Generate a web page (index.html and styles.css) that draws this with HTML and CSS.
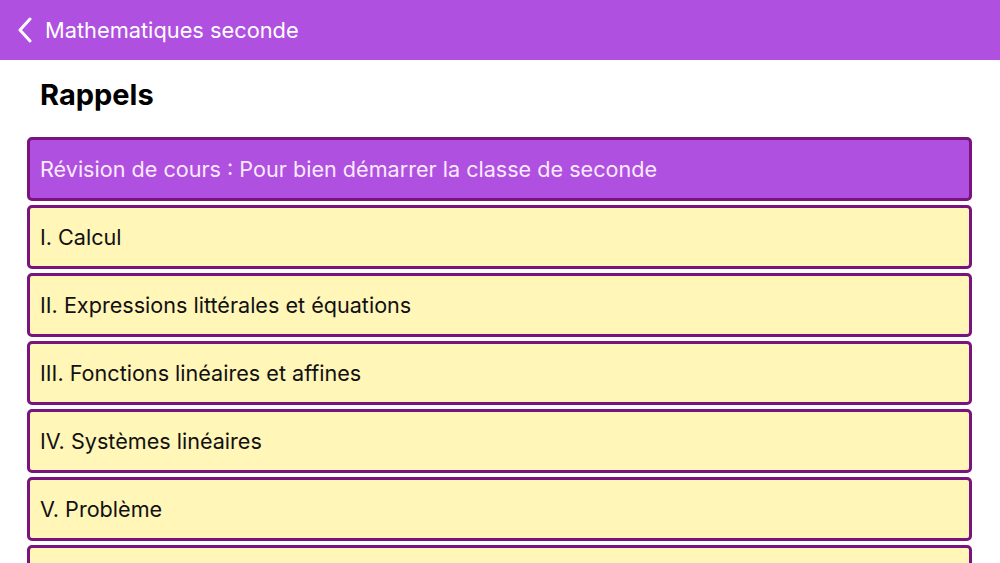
FILE: index.html
```html
<!DOCTYPE html>
<html lang="fr">
<head>
  <meta charset="UTF-8">
  <title>Mathematiques seconde</title>
  <link rel="stylesheet" href="styles.css">
</head>
<body>
  <div id="top-bar">
    <a href="#" class="back-button">
      <svg width="16" height="26" viewBox="0 0 16 26"><path d="M13 2 L3 13 L13 24" fill="none" stroke="#fff" stroke-width="3" stroke-linecap="round" stroke-linejoin="round"/></svg>
      <span>Mathematiques seconde</span>
    </a>
  </div>
  <div id="content">
    <h1 class="section-title">Rappels</h1>
    <div class="chapter-list">
      <div class="chapter active">Révision de cours : Pour bien démarrer la classe de seconde</div>
      <div class="chapter">I. Calcul</div>
      <div class="chapter">II. Expressions littérales et équations</div>
      <div class="chapter">III. Fonctions linéaires et affines</div>
      <div class="chapter">IV. Systèmes linéaires</div>
      <div class="chapter">V. Problème</div>
      <div class="chapter"></div>
    </div>
  </div>
</body>
</html>
```

FILE: styles.css
```css
body {
  margin: 0;
  font-family: 'Inter', 'Liberation Sans', sans-serif;
  background-color: #fff;
  overflow: hidden;
  height: 563px;
}
#top-bar {
  height: 60px;
  background-color: #b050e0;
  display: flex;
  align-items: center;
  padding-left: 17px;
}
.back-button {
  display: flex;
  align-items: center;
  gap: 12px;
  color: #fff;
  text-decoration: none;
  font-size: 21.8px;
}
#content {
  padding: 0 28px 0 27px;
}
.section-title {
  margin: 0;
  height: 77px;
  box-sizing: border-box;
  padding: 0 0 9px 13px;
  display: flex;
  align-items: center;
  font-size: 29px;
  font-weight: 700;
  color: #000;
}
.chapter-list {
  display: flex;
  flex-direction: column;
  gap: 4px;
}
.chapter {
  height: 64px;
  box-sizing: border-box;
  border: 3px solid #7a137e;
  border-radius: 5px;
  background-color: #fff6b8;
  display: flex;
  align-items: center;
  padding-left: 10px;
  font-size: 21.6px;
  color: #111;
}
.chapter.active {
  background-color: #b050e0;
  color: #fbeaff;
}
```
